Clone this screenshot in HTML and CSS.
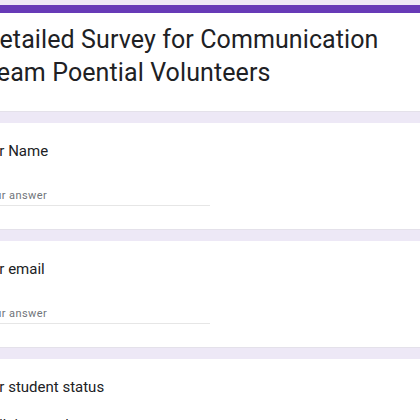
FILE: index.html
```html
<!DOCTYPE html>
<html lang="en">
<head>
<meta charset="utf-8">
<title>Detailed Survey for Communication Team Poential Volunteers</title>
<link rel="stylesheet" href="styles.css">
</head>
<body>
<main class="form">
  <section class="card header-card">
    <h1 class="form-title">Detailed Survey for Communication Team Poential Volunteers</h1>
  </section>
  <section class="card question-card">
    <div class="question">Your Name</div>
    <div class="answer"><span class="placeholder">Your answer</span></div>
  </section>
  <section class="card question-card">
    <div class="question">Your email</div>
    <div class="answer"><span class="placeholder">Your answer</span></div>
  </section>
  <section class="card question-card">
    <div class="question">Your student status</div>
    <div class="option">Full-time student</div>
  </section>
</main>
</body>
</html>
```
FILE: styles.css
```css
html, body {
  margin: 0;
  padding: 0;
}
body {
  background: #ede8f6;
  font-family: Roboto, "Liberation Sans", sans-serif;
  color: #202124;
  overflow: hidden;
  height: 420px;
}
.form {
  margin-left: -40px;
  width: 500px;
  padding-top: 5px;
  display: flex;
  flex-direction: column;
  gap: 11px;
}
.card {
  background: #ffffff;
  border-bottom: 1px solid #e4e1ea;
}
.header-card {
  border-top: 8px solid #673ab7;
  padding: 10px 0 22px 23px;
}
.form-title {
  margin: 0;
  font-weight: 400;
  font-size: 25px;
  line-height: 33px;
  width: 430px;
  letter-spacing: 0.1px;
}
.question-card {
  padding: 18px 0 23px 14px;
}
.question {
  font-size: 15px;
  line-height: 20px;
}
.answer {
  margin-top: 25px;
  width: 236px;
  border-bottom: 1px solid #e6e6e6;
  padding-bottom: 1px;
  line-height: 16px;
}
.placeholder {
  font-size: 11px;
  letter-spacing: 0.4px;
  color: #70757a;
  padding-left: 8px;
}
.option {
  margin-top: 19px;
  font-size: 14px;
  line-height: 18px;
  padding-left: 10px;
}
```
